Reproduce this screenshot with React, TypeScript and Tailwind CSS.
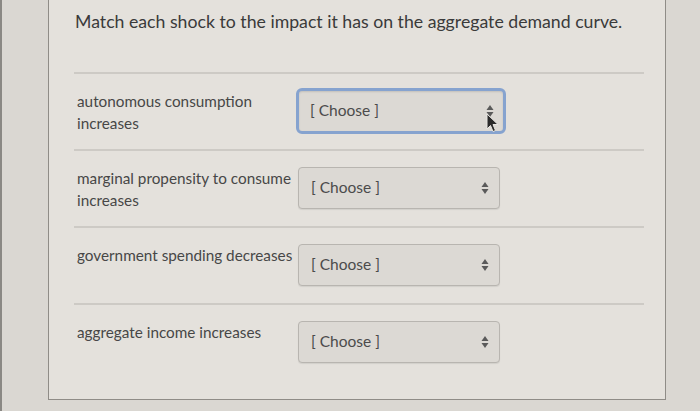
import React from "react";

const Arrows = () => (
  <svg width="8" height="14" viewBox="0 0 8 14" className="shrink-0">
    <path d="M4 1 L7.5 6 L0.5 6 Z" fill="#5a5a5a" />
    <path d="M4 13 L7.5 8 L0.5 8 Z" fill="#5a5a5a" />
  </svg>
);

const Cursor = () => (
  <svg width="14" height="20" viewBox="0 0 14 20" className="absolute left-[187px] top-[22px]">
    <path d="M1 1 L1 16 L4.5 12.5 L7 18.5 L9.5 17.5 L7 11.5 L12 11.5 Z" fill="#2a2a2a" stroke="#e8e6e2" strokeWidth="1" />
  </svg>
);

function Select({ focused = false }: { focused?: boolean }) {
  return (
    <div
      className={
        focused
          ? "relative w-[210px] h-[46px] -my-[2px] -ml-[2px] rounded-[6px] border-[3px] border-[#86a3cf] bg-[#dcd9d4] flex items-center pl-[11px] pr-[9px] justify-between shadow-[inset_0_1px_2px_rgba(0,0,0,0.12)]"
          : "relative w-[202px] h-[42px] rounded-[4px] border border-[#b8b5b0] bg-[#dcd9d4] flex items-center pl-[12px] pr-[10px] justify-between shadow-[0_1px_1px_rgba(0,0,0,0.08)]"
      }
    >
      <span className="text-[15.5px] text-[#4b4b4b] leading-none">[ Choose ]</span>
      <Arrows />
      {focused && <Cursor />}
    </div>
  );
}

function Row({ label, focused }: { label: React.ReactNode; focused?: boolean }) {
  return (
    <div className="border-t-2 border-[#cdcac5] pt-[16px] pb-[17px]">
      <div className="h-[42px] flex items-start">
        <div className="w-[224px] pl-[3px] text-[15.3px] leading-[22px] text-[#474747]">{label}</div>
        <Select focused={focused} />
      </div>
    </div>
  );
}

export default function App() {
  return (
    <div
      className="w-[700px] h-[411px] overflow-hidden bg-[#dad7d2] border-l-[2px] border-[#8a8884]"
      style={{ fontFamily: "Lato, 'Open Sans', sans-serif" }}
    >
      <div className="ml-[46px] w-[618px] h-[400px] border-x border-b border-[#8f8c87] bg-[#e4e1dc]">
        <div className="pt-[8px] pl-[26px] text-[17.7px] leading-[28px] text-[#3a3a3a]">
          Match each shock to the impact it has on the aggregate demand curve.
        </div>
        <div className="mt-[36px] ml-[25px] mr-[21px]">
          <Row
            focused
            label={
              <>
                autonomous consumption
                <br />
                increases
              </>
            }
          />
          <Row
            label={
              <>
                marginal propensity to consume
                <br />
                increases
              </>
            }
          />
          <Row label="government spending decreases" />
          <Row label="aggregate income increases" />
        </div>
      </div>
    </div>
  );
}
